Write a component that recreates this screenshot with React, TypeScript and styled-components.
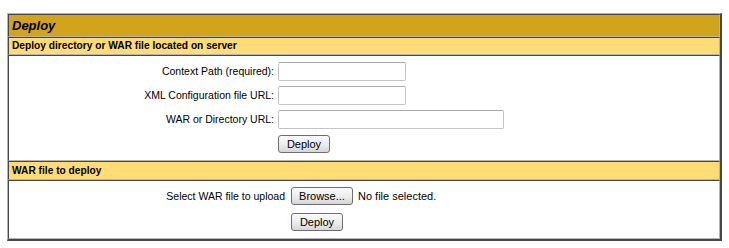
import React from "react";
import styled, { createGlobalStyle } from "styled-components";

const Global = createGlobalStyle`
  html, body { background: #ffffff; }
  body {
    margin: 13px 7px 0 7px;
    font-family: "Liberation Sans", Arial, sans-serif;
    color: #000;
  }
`;

const LIGHT = "#b4b4b4";
const DARK = "#474747";

const Panel = styled.div`
  border-top: 1px solid ${LIGHT};
  border-left: 1px solid ${LIGHT};
  border-right: 2px solid ${DARK};
  border-bottom: 2px solid ${DARK};
  display: flex;
  flex-direction: column;
`;

const Cell = styled.div<{ $bg?: string; $h?: number }>`
  border-top: 1px solid ${DARK};
  border-left: 1px solid ${DARK};
  border-right: 1px solid ${LIGHT};
  border-bottom: 1px solid ${LIGHT};
  background: ${(p) => p.$bg ?? "#ffffff"};
  ${(p) => (p.$h ? `height: ${p.$h}px;` : "")}
  box-sizing: content-box;
`;

const TitleText = styled.div`
  font-size: 13px;
  font-weight: bold;
  font-style: italic;
  line-height: 21px;
  padding-left: 3px;
`;

const HeaderText = styled.div<{ $lh: number }>`
  font-size: 10.2px;
  font-weight: bold;
  line-height: ${(p) => p.$lh}px;
  padding-left: 3px;
`;

const FormGrid = styled.div<{ $label: number; $gap: number; $rowGap: number; $pt: number; $pb: number }>`
  display: grid;
  grid-template-columns: ${(p) => p.$label}px 1fr;
  column-gap: ${(p) => p.$gap}px;
  row-gap: ${(p) => p.$rowGap}px;
  padding: ${(p) => p.$pt}px 0 ${(p) => p.$pb}px 0;
  align-items: center;
`;

const Label = styled.div<{ $h: number }>`
  font-size: 10.5px;
  text-align: right;
  white-space: nowrap;
  height: ${(p) => p.$h}px;
  line-height: ${(p) => p.$h}px;
`;

const Field = styled.div<{ $h: number }>`
  height: ${(p) => p.$h}px;
  display: flex;
  align-items: center;
  gap: 5px;
`;

const TextInput = styled.input<{ $w: number }>`
  box-sizing: border-box;
  width: ${(p) => p.$w}px;
  height: 19px;
  margin: 0;
  padding: 1px 3px;
  border: 1px solid #c2c4c6;
  border-top-color: #a9abad;
  border-radius: 2px;
  background: #fff;
  font-family: "Liberation Sans", Arial, sans-serif;
  font-size: 11px;
  outline: none;
`;

const Button = styled.button<{ $w: number }>`
  box-sizing: border-box;
  width: ${(p) => p.$w}px;
  height: 18px;
  margin: 0;
  padding: 0;
  border: 1px solid #6e6e6e;
  border-radius: 3px;
  background: linear-gradient(#fbfbfb, #ececec 55%, #d6d6d6);
  font-family: "Liberation Sans", Arial, sans-serif;
  font-size: 11px;
  line-height: 16px;
  color: #000;
`;

const FileText = styled.span`
  font-size: 11px;
  white-space: nowrap;
`;

export default function App() {
  return (
    <>
      <Global />
      <Panel>
        <Cell $bg="#D2A41C" $h={21}>
          <TitleText>Deploy</TitleText>
        </Cell>
        <Cell $bg="#FFDC75" $h={16}>
          <HeaderText $lh={16}>Deploy directory or WAR file located on server</HeaderText>
        </Cell>
        <Cell>
          <FormGrid $label={265} $gap={4} $rowGap={5} $pt={6} $pb={7}>
            <Label $h={19}>Context Path (required):</Label>
            <Field $h={19}>
              <TextInput type="text" $w={128} />
            </Field>
            <Label $h={19}>XML Configuration file URL:</Label>
            <Field $h={19}>
              <TextInput type="text" $w={128} />
            </Field>
            <Label $h={19}>WAR or Directory URL:</Label>
            <Field $h={19}>
              <TextInput type="text" $w={226} />
            </Field>
            <Label $h={19}>&nbsp;</Label>
            <Field $h={19}>
              <Button $w={52}>Deploy</Button>
            </Field>
          </FormGrid>
        </Cell>
        <Cell $bg="#FFDC75" $h={17}>
          <HeaderText $lh={17}>WAR file to deploy</HeaderText>
        </Cell>
        <Cell>
          <FormGrid $label={276} $gap={6} $rowGap={8} $pt={6} $pb={7}>
            <Label $h={18}>Select WAR file to upload</Label>
            <Field $h={18}>
              <Button $w={62}>Browse...</Button>
              <FileText>No file selected.</FileText>
            </Field>
            <Label $h={18}>&nbsp;</Label>
            <Field $h={18}>
              <Button $w={52}>Deploy</Button>
            </Field>
          </FormGrid>
        </Cell>
      </Panel>
    </>
  );
}
